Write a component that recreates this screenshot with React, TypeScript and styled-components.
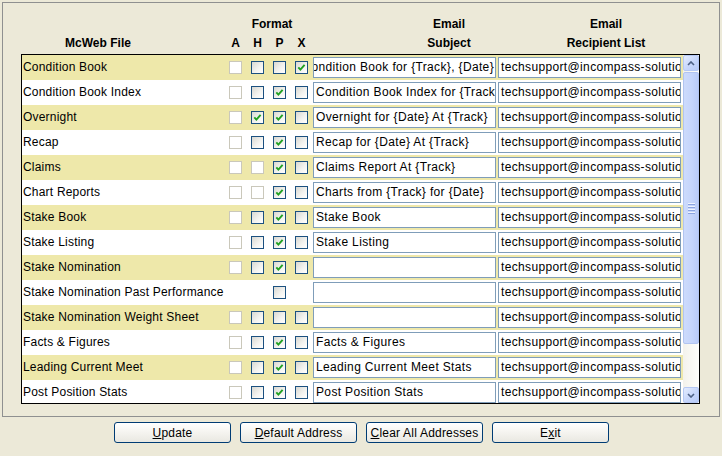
import React from 'react';
import styled, { createGlobalStyle } from 'styled-components';

type BoxState = 'none' | 'disabled' | 'off' | 'on';

interface FileRow {
  name: string;
  a: BoxState;
  h: BoxState;
  p: BoxState;
  x: BoxState;
  subject: string;
  /** subject field scrolled to its end */
  scrolled?: boolean;
  email: string;
}

const EMAIL = 'techsupport@incompass-solutions.com';

const rows: FileRow[] = [
  { name: 'Condition Book', a: 'disabled', h: 'off', p: 'off', x: 'on', subject: 'Condition Book for {Track}, {Date}', scrolled: true, email: EMAIL },
  { name: 'Condition Book Index', a: 'disabled', h: 'off', p: 'on', x: 'off', subject: 'Condition Book Index for {Track}, {Date}', email: EMAIL },
  { name: 'Overnight', a: 'disabled', h: 'on', p: 'on', x: 'off', subject: 'Overnight for {Date} At {Track}', email: EMAIL },
  { name: 'Recap', a: 'disabled', h: 'off', p: 'on', x: 'off', subject: 'Recap for {Date} At {Track}', email: EMAIL },
  { name: 'Claims', a: 'disabled', h: 'disabled', p: 'on', x: 'off', subject: 'Claims Report At {Track}', email: EMAIL },
  { name: 'Chart Reports', a: 'disabled', h: 'disabled', p: 'on', x: 'off', subject: 'Charts from {Track} for {Date}', email: EMAIL },
  { name: 'Stake Book', a: 'disabled', h: 'off', p: 'on', x: 'off', subject: 'Stake Book', email: EMAIL },
  { name: 'Stake Listing', a: 'disabled', h: 'off', p: 'on', x: 'off', subject: 'Stake Listing', email: EMAIL },
  { name: 'Stake Nomination', a: 'disabled', h: 'off', p: 'on', x: 'off', subject: '', email: EMAIL },
  { name: 'Stake Nomination Past Performance', a: 'none', h: 'none', p: 'off', x: 'none', subject: '', email: EMAIL },
  { name: 'Stake Nomination Weight Sheet', a: 'disabled', h: 'off', p: 'off', x: 'off', subject: '', email: EMAIL },
  { name: 'Facts & Figures', a: 'disabled', h: 'off', p: 'on', x: 'off', subject: 'Facts & Figures', email: EMAIL },
  { name: 'Leading Current Meet', a: 'disabled', h: 'off', p: 'on', x: 'off', subject: 'Leading Current Meet Stats', email: EMAIL },
  { name: 'Post Position Stats', a: 'disabled', h: 'off', p: 'on', x: 'off', subject: 'Post Position Stats', email: EMAIL },
];

const GlobalStyle = createGlobalStyle`
  html, body {
    margin: 0;
    padding: 0;
    background: #ece9d8;
  }
  body {
    font-family: 'Liberation Sans', Arial, sans-serif;
    font-size: 12px;
    color: #000;
  }
`;

const Screen = styled.div`
  width: 722px;
  height: 456px;
  padding: 2px;
  box-sizing: border-box;
`;

const Panel = styled.div`
  width: 718px;
  height: 415px;
  box-sizing: border-box;
  border: 1px solid #8f9090;
  padding: 12px 0 0 18px;
  display: flex;
  flex-direction: column;
`;

const HeaderRow = styled.div`
  display: flex;
  height: 38px;
  margin-bottom: 1px;
`;

const HeaderCell = styled.div<{ $width: number; $skip?: number }>`
  width: ${(p) => p.$width}px;
  margin-left: ${(p) => p.$skip ?? 0}px;
  display: flex;
  flex-direction: column;
  align-items: center;
  font-weight: bold;
  white-space: nowrap;
`;

const HeaderLine = styled.div`
  height: 19px;
  line-height: 19px;
`;

const LetterRow = styled.div`
  display: flex;
  align-self: flex-start;
  height: 19px;
  line-height: 19px;
`;

const Letter = styled.span`
  width: 19px;
  margin-right: 3px;
  text-align: center;
`;

const Table = styled.div`
  width: 679px;
  height: 350px;
  box-sizing: border-box;
  border: 1px solid #000;
  display: flex;
  background: #fff;
`;

const Rows = styled.div`
  flex: 1;
  overflow: hidden;
`;

const Row = styled.div<{ $alt: boolean }>`
  height: 25px;
  display: flex;
  align-items: center;
  background: ${(p) => (p.$alt ? '#eee8aa' : '#ffffff')};
  letter-spacing: 0.2px;
`;

const NameCell = styled.div`
  width: 204px;
  padding-left: 1px;
  box-sizing: border-box;
  white-space: nowrap;
  overflow: hidden;
  line-height: 25px;
`;

const BoxCell = styled.div<{ $last?: boolean }>`
  width: ${(p) => (p.$last ? 21 : 22)}px;
  height: 25px;
  padding-left: 3px;
  box-sizing: border-box;
  display: flex;
  align-items: center;
`;

const Box = styled.span<{ $disabled: boolean }>`
  width: 13px;
  height: 13px;
  box-sizing: border-box;
  border: 1px solid ${(p) => (p.$disabled ? '#cac8bb' : '#1c5180')};
  background: ${(p) => (p.$disabled ? '#ffffff' : 'linear-gradient(135deg, #d8d8d2 0%, #f4f4f1 60%, #ffffff 100%)')};
  display: flex;
  align-items: center;
  justify-content: center;
`;

const Field = styled.div<{ $end?: boolean; $gap?: number }>`
  width: 183px;
  height: 21px;
  margin-right: ${(p) => p.$gap ?? 0}px;
  box-sizing: border-box;
  border: 1px solid #7f9db9;
  background: #fff;
  padding: 0 1px 0 2px;
  display: flex;
  align-items: center;
  justify-content: ${(p) => (p.$end ? 'flex-end' : 'flex-start')};
  overflow: hidden;
  white-space: nowrap;
  line-height: 19px;
  letter-spacing: 0.35px;
`;

const FieldText = styled.span`
  flex-shrink: 0;
`;

const ScrollBar = styled.div`
  width: 16px;
  display: flex;
  flex-direction: column;
  background: linear-gradient(to right, #f3f2ec, #fefefb);
`;

const ScrollButton = styled.div`
  height: 16px;
  box-sizing: border-box;
  border: 1px solid #b5c8f4;
  border-radius: 2px;
  background: linear-gradient(135deg, #e4ecfe 0%, #c6d6fb 55%, #b8cbf8 100%);
  display: flex;
  align-items: center;
  justify-content: center;
`;

const Track = styled.div`
  flex: 1;
  padding-top: 1px;
`;

const Thumb = styled.div`
  box-sizing: border-box;
  border: 1px solid #b1c4f1;
  border-radius: 2px;
  background: linear-gradient(to right, #cddbfc 0%, #c4d4fb 60%, #b9cbf8 100%);
  display: flex;
  flex-direction: column;
  align-items: center;
  justify-content: center;
  gap: 1px;
`;

const Grip = styled.span`
  width: 7px;
  height: 1px;
  background: #eef3fe;
  box-shadow: 0 1px 0 #8ca4e0;
  margin-bottom: 1px;
`;

const ButtonBar = styled.div`
  display: flex;
  justify-content: center;
  gap: 9px;
  margin-top: 5px;
  padding-left: 1px;
`;

const Button = styled.button`
  width: 117px;
  height: 21px;
  padding: 0;
  box-sizing: border-box;
  border: 1px solid #003c74;
  border-radius: 3px;
  background: linear-gradient(to bottom, #ffffff 0%, #f6f5f1 45%, #e9e8e1 100%);
  font-family: 'Liberation Sans', Arial, sans-serif;
  font-size: 12px;
  letter-spacing: 0.2px;
  color: #000;
`;

const Check = () => (
  <svg width="9" height="9" viewBox="0 0 9 9">
    <path d="M1.3 4.3 L3.4 6.6 L7.6 1.8" fill="none" stroke="#21a121" strokeWidth="1.9" />
  </svg>
);

const CheckBox = ({ state }: { state: BoxState }) => {
  if (state === 'none') return null;
  return <Box $disabled={state === 'disabled'}>{state === 'on' && <Check />}</Box>;
};

const Caret = ({ down }: { down?: boolean }) => (
  <svg width="8" height="5" viewBox="0 0 8 5">
    <path
      d={down ? 'M1 1 L4 4 L7 1' : 'M1 4 L4 1 L7 4'}
      fill="none"
      stroke="#4d6185"
      strokeWidth="1.6"
    />
  </svg>
);

const Mnemonic = ({ label, at }: { label: string; at: number }) => (
  <>
    {label.slice(0, at)}
    <u>{label[at]}</u>
    {label.slice(at + 1)}
  </>
);

export default function App() {
  return (
    <Screen>
      <GlobalStyle />
      <Panel>
        <HeaderRow>
          <HeaderCell $width={154}>
            <HeaderLine />
            <HeaderLine>McWeb File</HeaderLine>
          </HeaderCell>
          <HeaderCell $width={92} $skip={51}>
            <HeaderLine>Format</HeaderLine>
            <LetterRow>
              <Letter>A</Letter>
              <Letter>H</Letter>
              <Letter>P</Letter>
              <Letter>X</Letter>
            </LetterRow>
          </HeaderCell>
          <HeaderCell $width={138} $skip={62}>
            <HeaderLine>Email</HeaderLine>
            <HeaderLine>Subject</HeaderLine>
          </HeaderCell>
          <HeaderCell $width={152} $skip={12}>
            <HeaderLine>Email</HeaderLine>
            <HeaderLine>Recipient List</HeaderLine>
          </HeaderCell>
        </HeaderRow>

        <Table>
          <Rows>
            {rows.map((r, i) => (
              <Row key={r.name} $alt={i % 2 === 0}>
                <NameCell>{r.name}</NameCell>
                <BoxCell>
                  <CheckBox state={r.a} />
                </BoxCell>
                <BoxCell>
                  <CheckBox state={r.h} />
                </BoxCell>
                <BoxCell>
                  <CheckBox state={r.p} />
                </BoxCell>
                <BoxCell $last>
                  <CheckBox state={r.x} />
                </BoxCell>
                <Field $end={r.scrolled} $gap={2}>
                  <FieldText>{r.subject}</FieldText>
                </Field>
                <Field>
                  <FieldText>{r.email}</FieldText>
                </Field>
              </Row>
            ))}
          </Rows>
          <ScrollBar>
            <ScrollButton>
              <Caret />
            </ScrollButton>
            <Track>
              <Thumb style={{ height: 272 }}>
                <Grip />
                <Grip />
                <Grip />
                <Grip />
              </Thumb>
            </Track>
            <ScrollButton>
              <Caret down />
            </ScrollButton>
          </ScrollBar>
        </Table>
      </Panel>

      <ButtonBar>
        <Button>
          <Mnemonic label="Update" at={0} />
        </Button>
        <Button>
          <Mnemonic label="Default Address" at={0} />
        </Button>
        <Button>
          <Mnemonic label="Clear All Addresses" at={0} />
        </Button>
        <Button>
          <Mnemonic label="Exit" at={1} />
        </Button>
      </ButtonBar>
    </Screen>
  );
}
